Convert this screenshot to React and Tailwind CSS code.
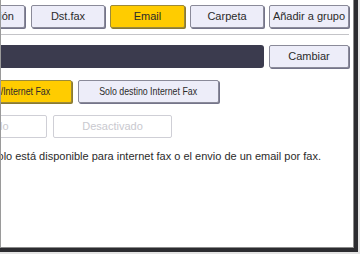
const font = { fontFamily: "'Liberation Sans', Arial, sans-serif" };

function Btn({ children, className = "", tone = "plain" }) {
  const tones = {
    plain: "bg-[#ededf9] border-[#8a8a99] text-[#2b2b2b] shadow-[1px_1px_0_#74748a]",
    active: "bg-[#ffcc00] border-[#9c8a3a] text-[#2b2b2b] shadow-[1px_1px_0_#8a7a30]",
    off: "bg-white border-[#cfcfd6] text-[#c9c9cf]",
  };
  return (
    <div
      className={`flex h-[23px] shrink-0 items-center justify-center whitespace-nowrap rounded-[2px] border text-[11px] ${tones[tone]} ${className}`}
    >
      {children}
    </div>
  );
}

export default function App() {
  return (
    <div className="h-[254px] w-[360px] overflow-hidden bg-[#e4e4e4]" style={font}>
      <div className="flex h-[252px] w-[358px] bg-[#2c2c30] pb-[4px] pr-[4px]">
        <div className="flex-1 overflow-hidden border-b border-l border-r border-b-[#8a8a8a] border-l-[#9a9a9a] border-r-[#8a8a8a] bg-white">
          <div className="flex gap-[5px] pt-[5px]">
            <Btn className="-ml-[50px] w-[74px]">Protección</Btn>
            <Btn className="ml-[1px] w-[74px]">Dst.fax</Btn>
            <Btn tone="active" className="w-[75px]">Email</Btn>
            <Btn className="w-[74px]">Carpeta</Btn>
            <Btn className="w-[80px]">Añadir a grupo</Btn>
          </div>

          <div className="mt-[6px] h-px w-[348px] bg-[#c4c4c8]" />

          <div className="mt-[10px] flex gap-[5px]">
            <div className="h-[23px] w-[263px] rounded-r-[3px] bg-[#3b3b4e]" />
            <Btn className="w-[80px]">Cambiar</Btn>
          </div>

          <div className="mt-[12px] flex gap-[6px]">
            <Btn tone="active" className="-ml-[66px] w-[137px]">
              <span className="inline-block scale-x-[0.8]">Dest. email/Internet Fax</span>
            </Btn>
            <Btn className="w-[141px]">
              <span className="inline-block scale-x-[0.8]">Solo destino Internet Fax</span>
            </Btn>
          </div>

          <div className="mt-[12px] flex gap-[6px]">
            <Btn tone="off" className="-ml-[73px] w-[119px]">Activado</Btn>
            <Btn tone="off" className="w-[119px]">Desactivado</Btn>
          </div>

          <div className="mt-[10px] flex h-[16px] justify-end whitespace-nowrap pr-[32px] text-[11px] leading-[16px] text-[#2b2b2b]">
            <p>Solo está disponible para internet fax o el envio de un email por fax.</p>
          </div>
        </div>
      </div>
    </div>
  );
}
